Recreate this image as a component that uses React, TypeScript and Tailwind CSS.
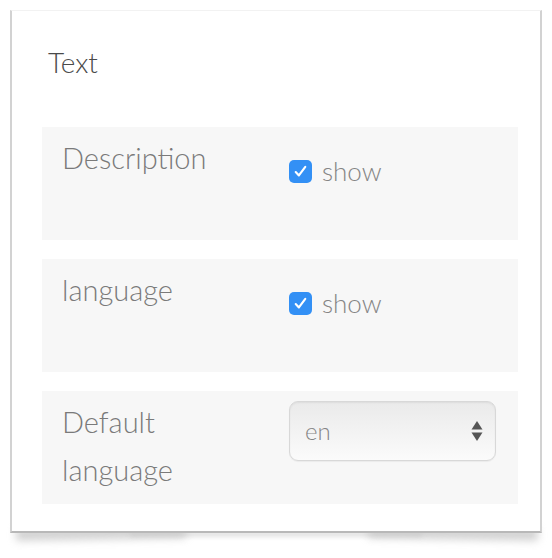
import React from 'react';

const font = { fontFamily: 'Lato, "Open Sans", sans-serif' };

const ShowToggle = () => (
  <label className="flex items-center gap-[10px] mt-[24px]">
    <span className="flex h-[23px] w-[23px] items-center justify-center rounded-[5px] bg-[#3390f5]">
      <svg viewBox="0 0 16 16" className="h-[17px] w-[17px]" fill="none" stroke="white" strokeWidth="2" strokeLinecap="round" strokeLinejoin="round">
        <path d="M3.5 8.5l3 3.2 6-8" />
      </svg>
    </span>
    <span className="text-[26px] font-light leading-none text-[#858585]">show</span>
  </label>
);

const LangSelect = () => (
  <div className="mt-[3px] flex h-[60px] w-[207px] items-center justify-between rounded-[9px] border border-[#d8d8d8] bg-gradient-to-b from-[#eaeaea] to-[#fbfbfb] pl-[15px] pr-[12px] shadow-[inset_0_1px_2px_rgba(0,0,0,0.06),0_1px_1px_rgba(0,0,0,0.05)]">
    <span className="text-[24px] font-light leading-none text-[#858585]">en</span>
    <svg viewBox="0 0 12 22" className="h-[22px] w-[12px]" fill="#555">
      <path d="M6 1l5.5 8.5H0.5z" />
      <path d="M6 21l5.5-8.5H0.5z" />
    </svg>
  </div>
);

const rows = [
  { label: 'Description', control: <ShowToggle /> },
  { label: 'language', control: <ShowToggle /> },
  { label: 'Default language', control: <LangSelect /> },
];

export default function App() {
  return (
    <div className="h-[558px] w-[552px] bg-white pl-[10px] pt-[10px]" style={font}>
      <div className="relative h-[523px] w-[532px]">
        {/* curled page shadow */}
        <div className="absolute bottom-[-6px] left-[6px] h-[12px] w-[170px] -rotate-1 bg-[#a0a0a0] opacity-50 blur-[4px]" />
        <div className="absolute bottom-[-6px] right-[4px] h-[12px] w-[170px] rotate-1 bg-[#a0a0a0] opacity-50 blur-[4px]" />
        <div className="absolute bottom-[-4px] left-[120px] right-[120px] h-[6px] bg-[#c8c8c8] opacity-50 blur-[2px]" />
        <div className="relative h-full w-full border-x-2 border-b-2 border-t border-x-[#d2d2d2] border-b-[#b8b8b8] border-t-[#f2f2f2] bg-white pl-[30px] pr-[22px] pt-[33px]">
          <h2 className="ml-[6px] text-[28px] font-light leading-[36px] text-[#4a4a4a]">Text</h2>
          <div className="mt-[47px] flex flex-col gap-[19px]">
            {rows.map((row) => (
              <div key={row.label} className="flex h-[113px] bg-[#f7f7f7] pl-[20px] pt-[7px]">
                <div className="w-[227px] pr-[60px] text-[29px] font-light leading-[48px] text-[#7a7a7a]">{row.label}</div>
                <div>{row.control}</div>
              </div>
            ))}
          </div>
        </div>
      </div>
    </div>
  );
}
